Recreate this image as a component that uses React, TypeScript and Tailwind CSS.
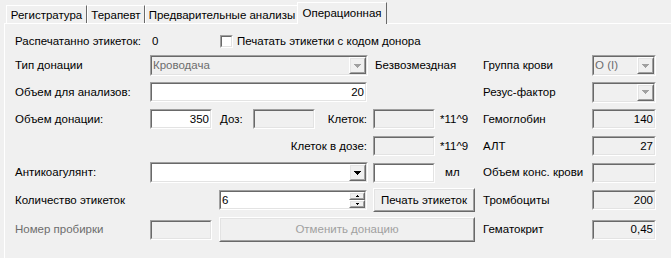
import React from 'react';

type Kids = { className?: string; bg?: string; children?: React.ReactNode };

function Sunken({ className = '', bg = 'bg-[#f0f0f0]', children }: Kids) {
  return (
    <div className={`shrink-0 flex border border-t-[#a0a0a0] border-l-[#a0a0a0] border-r-white border-b-white ${className}`}>
      <div className={`flex-1 flex items-center min-w-0 border border-t-[#696969] border-l-[#696969] border-r-[#e3e3e3] border-b-[#e3e3e3] ${bg}`}>
        {children}
      </div>
    </div>
  );
}

function Raised({ className = '', children }: Kids) {
  return (
    <div className={`shrink-0 flex border border-t-white border-l-white border-r-[#696969] border-b-[#696969] ${className}`}>
      <div className="flex-1 flex items-center justify-center min-w-0 border border-t-[#e3e3e3] border-l-[#e3e3e3] border-r-[#a0a0a0] border-b-[#a0a0a0] bg-[#f0f0f0]">
        {children}
      </div>
    </div>
  );
}

function Tri({ color, up = false, size = 7 }: { color: string; up?: boolean; size?: number }) {
  const rows = size === 7 ? [7, 5, 3, 1] : size === 5 ? [5, 3, 1] : [3, 1];
  const h = rows.length;
  return (
    <svg width={size} height={h} viewBox={`0 0 ${size} ${h}`} shapeRendering="crispEdges">
      {rows.map((w, i) => (
        <rect key={i} x={(size - w) / 2} y={up ? h - 1 - i : i} width={w} height={1} fill={color} />
      ))}
    </svg>
  );
}

function Combo({ className = '', bg = 'bg-[#f0f0f0]', text = '', textClass = '', arrow = '#a0a0a0' }: { className?: string; bg?: string; text?: string; textClass?: string; arrow?: string }) {
  return (
    <Sunken className={className} bg={bg}>
      <span className={`flex-1 pl-[1px] whitespace-nowrap overflow-hidden ${textClass}`}>{text}</span>
      <Raised className="w-[17px] self-stretch">
        <Tri color={arrow} />
      </Raised>
    </Sunken>
  );
}

function Spinner() {
  return (
    <Sunken className="w-[148px] h-[20px]" bg="bg-white">
      <span className="flex-1 pl-[1px]">6</span>
      <div className="flex flex-col self-stretch w-[16px]">
        <Raised className="h-[8px] w-[16px]">
          <Tri color="#000" up size={3} />
        </Raised>
        <Raised className="h-[8px] w-[16px]">
          <Tri color="#000" size={3} />
        </Raised>
      </div>
    </Sunken>
  );
}

function Tab({ label, className = '' }: { label: string; className?: string }) {
  return (
    <div className={`h-[18px] flex items-center justify-center pt-[1px] border-t border-l border-t-white border-l-white border-r border-r-[#696969] whitespace-nowrap ${className}`}>
      {label}
    </div>
  );
}

export default function App() {
  return (
    <div className="w-[671px] h-[258px] bg-[#f0f0f0] text-[11.5px] leading-[13px] text-black font-['Liberation_Sans',Arial,sans-serif] overflow-hidden">
      {/* tabs */}
      <div className="h-[23px] flex items-end pl-[6px]">
        <Tab label="Регистратура" className="w-[81px]" />
        <Tab label="Терапевт" className="w-[58px]" />
        <Tab label="Предварительные анализы" className="w-[154px]" />
        <div className="relative z-10 -ml-[2px] -mb-[1px] h-[22px] w-[90px] flex items-start pt-[4px] justify-center bg-[#f0f0f0] border-t border-l border-t-white border-l-white border-r border-r-[#696969] whitespace-nowrap">
          Операционная
        </div>
      </div>
      {/* panel */}
      <div className="ml-[4px] h-[235px] border-t border-l border-t-white border-l-white pl-[10px] flex flex-col">
        {/* row 1 */}
        <div className="mt-[9px] h-[16px] flex items-center">
          <span className="w-[137px] shrink-0">Распечатанно этикеток:</span>
          <span className="w-[68px] shrink-0">0</span>
          <Sunken className="w-[13px] h-[13px]" bg="bg-white" />
          <span className="ml-[4px] whitespace-nowrap">Печатать этикетки с кодом донора</span>
        </div>
        {/* row 2 */}
        <div className="mt-[6px] h-[21px] flex items-center">
          <span className="w-[135px] shrink-0">Тип донации</span>
          <Combo className="w-[218px] h-[21px]" text="Кроводача" textClass="text-[#6d6d6d]" />
          <span className="ml-[7px] w-[108px] shrink-0">Безвозмездная</span>
          <span className="w-[109px] shrink-0">Группа крови</span>
          <Combo className="w-[64px] h-[21px]" text="O (I)" textClass="text-[#6d6d6d]" />
        </div>
        {/* row 3 */}
        <div className="mt-[6px] h-[20px] flex items-center">
          <span className="w-[135px] shrink-0">Объем для анализов:</span>
          <Sunken className="w-[217px] h-[20px]" bg="bg-white">
            <span className="flex-1 text-right pr-[1px]">20</span>
          </Sunken>
          <span className="ml-[116px] w-[109px] shrink-0">Резус-фактор</span>
          <Combo className="w-[64px] h-[21px]" />
        </div>
        {/* row 4 */}
        <div className="mt-[7px] h-[20px] flex items-center">
          <span className="w-[135px] shrink-0">Объем донации:</span>
          <Sunken className="w-[62px] h-[20px]" bg="bg-white">
            <span className="flex-1 text-right pr-[1px]">350</span>
          </Sunken>
          <span className="ml-[8px] w-[33px] shrink-0">Доз:</span>
          <Sunken className="w-[62px] h-[20px]" />
          <span className="w-[52px] shrink-0 text-right whitespace-nowrap">Клеток:</span>
          <Sunken className="ml-[6px] w-[62px] h-[20px]" />
          <span className="ml-[5px] w-[43px] shrink-0">*11^9</span>
          <span className="w-[109px] shrink-0">Гемоглобин</span>
          <Sunken className="w-[64px] h-[20px]">
            <span className="flex-1 text-right pr-[1px]">140</span>
          </Sunken>
        </div>
        {/* row 5 */}
        <div className="mt-[7px] h-[20px] flex items-center">
          <span className="w-[352px] shrink-0 text-right">Клеток в дозе:</span>
          <Sunken className="ml-[6px] w-[62px] h-[20px]" />
          <span className="ml-[5px] w-[43px] shrink-0">*11^9</span>
          <span className="w-[109px] shrink-0">АЛТ</span>
          <Sunken className="w-[64px] h-[20px]">
            <span className="flex-1 text-right pr-[1px]">27</span>
          </Sunken>
        </div>
        {/* row 6 */}
        <div className="mt-[6px] h-[21px] flex items-center">
          <span className="w-[135px] shrink-0">Антикоагулянт:</span>
          <Combo className="w-[218px] h-[21px]" bg="bg-white" arrow="#000" />
          <Sunken className="ml-[5px] w-[62px] h-[20px]" bg="bg-white" />
          <span className="ml-[10px] w-[38px] shrink-0">мл</span>
          <span className="w-[109px] shrink-0 whitespace-nowrap">Объем конс. крови</span>
          <Sunken className="w-[64px] h-[20px]" />
        </div>
        {/* row 7 */}
        <div className="mt-[5px] h-[24px] flex items-center">
          <span className="w-[204px] shrink-0">Количество этикеток</span>
          <Spinner />
          <Raised className="ml-[6px] w-[102px] h-[24px]">
            <span className="whitespace-nowrap">Печать этикеток</span>
          </Raised>
          <span className="ml-[8px] w-[109px] shrink-0">Тромбоциты</span>
          <Sunken className="w-[64px] h-[20px]">
            <span className="flex-1 text-right pr-[1px]">200</span>
          </Sunken>
        </div>
        {/* row 8 */}
        <div className="mt-[5px] h-[25px] flex items-center">
          <span className="w-[135px] shrink-0 text-[#6d6d6d]">Номер пробирки</span>
          <Sunken className="w-[62px] h-[20px]" />
          <Raised className="ml-[7px] w-[256px] h-[25px]">
            <span className="whitespace-nowrap text-[#a0a0a0]">Отменить донацию</span>
          </Raised>
          <span className="ml-[8px] w-[109px] shrink-0">Гематокрит</span>
          <Sunken className="w-[64px] h-[20px]">
            <span className="flex-1 text-right pr-[1px]">0,45</span>
          </Sunken>
        </div>
      </div>
    </div>
  );
}
